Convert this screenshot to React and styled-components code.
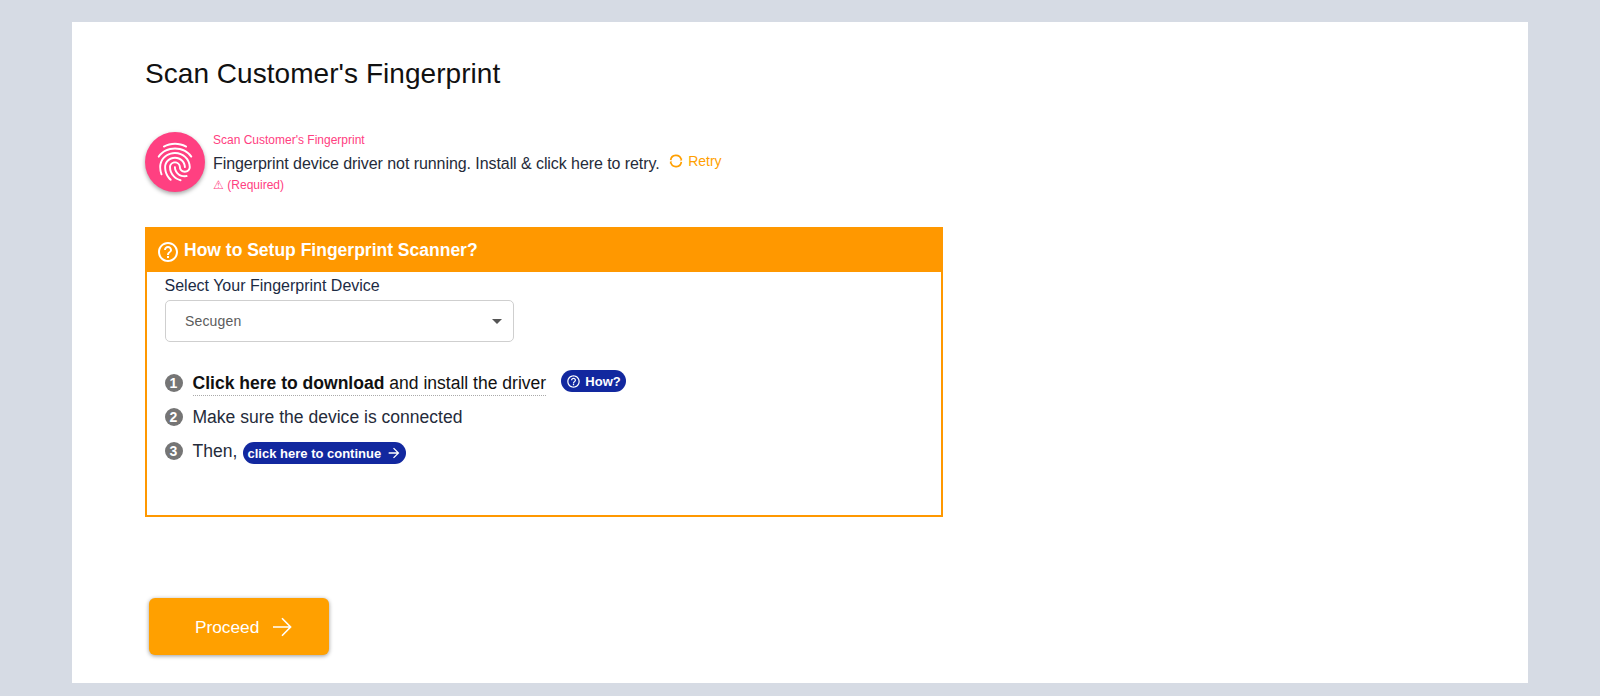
import React from 'react';
import styled, { createGlobalStyle } from 'styled-components';
import { MdArrowForward, MdFingerprint, MdHelpOutline } from 'react-icons/md';

const GlobalStyle = createGlobalStyle`
  * { box-sizing: border-box; }
  body {
    margin: 0;
    background: #d6dbe4;
    font-family: "Liberation Sans", Arial, sans-serif;
    color: #252b3a;
  }
`;

const Page = styled.div`
  min-height: 696px;
  padding: 22px 72px 13px;
`;

const Card = styled.main`
  height: 661px;
  padding: 34px 73px 0;
  background: #fff;
`;

const Title = styled.h1`
  margin: 0;
  font-size: 28px;
  line-height: 36px;
  font-weight: 400;
  letter-spacing: 0.05px;
  color: #111;
`;

const ScanRow = styled.section`
  display: flex;
  margin-top: 39px;
  height: 62px;
`;

const ScanBadge = styled.div`
  display: flex;
  align-items: center;
  justify-content: center;
  width: 60px;
  height: 60px;
  margin: 0.5px 0 0 -0.5px;
  border-radius: 50%;
  background: #ff4081;
  color: #fff;
  font-size: 46px;
  box-shadow: 0 2px 4px rgba(0, 0, 0, 0.35);
`;

const ScanInfo = styled.div`
  margin-left: 8.5px;
`;

const Caption = styled.div`
  font-size: 12px;
  line-height: 18px;
  color: #ff4081;
`;

const Message = styled.div`
  padding-top: 2px;
  font-size: 16px;
  line-height: 25px;
  letter-spacing: -0.07px;
`;

const RetryButton = styled.button`
  display: flex;
  align-items: center;
  gap: 5px;
  height: 28px;
  margin: 15.5px 0 0 9.5px;
  padding: 0;
  border: 0;
  background: none;
  font: 14px "Liberation Sans", Arial, sans-serif;
  color: #ff9f00;
`;

const Guide = styled.section`
  width: 798px;
  height: 290px;
  margin-top: 34px;
  border: 2px solid #ff9800;
`;

const GuideHeader = styled.header`
  display: flex;
  align-items: center;
  gap: 4.5px;
  height: 43px;
  padding: 0 0 0 8.5px;
  background: #ff9800;
  color: #fff;
  font-size: 17.5px;
  font-weight: 700;

  svg { margin-top: 3px; font-size: 24px; }
`;

const GuideBody = styled.div`
  padding: 3px 17.5px;
`;

const FieldLabel = styled.label`
  display: block;
  font-size: 16px;
  line-height: 22px;
  color: #1c2b44;
`;

const SelectBox = styled.div`
  display: flex;
  align-items: center;
  justify-content: space-between;
  width: 349px;
  height: 42px;
  margin-top: 3px;
  padding: 0 11px 0 19.5px;
  border: 1px solid #cfcfcf;
  border-radius: 5px;
  font-size: 14px;
  letter-spacing: 0.15px;
  color: #5c5c5c;
`;

const Caret = styled.span`
  border: 5px solid transparent;
  border-top-color: #555;
  border-bottom: 0;
`;

const Steps = styled.ol`
  margin: 24px 0 0;
  padding: 0;
  list-style: none;
`;

const Step = styled.li`
  display: flex;
  align-items: center;
  height: 34.2px;
  font-size: 17.55px;
`;

const StepNumber = styled.span`
  width: 18px;
  height: 18px;
  margin-right: 10px;
  border-radius: 50%;
  background: #757575;
  color: #fff;
  font-size: 14px;
  line-height: 18px;
  font-weight: 700;
  text-align: center;
`;

const DownloadLink = styled.a`
  padding: 2px 0 1px;
  border-bottom: 1px dotted #aaa;
  color: #111;
`;

const Pill = styled.button`
  display: flex;
  align-items: center;
  gap: ${(p) => p.$gap}px;
  height: 22px;
  margin: ${(p) => p.$margin};
  padding: 0 ${(p) => p.$pad}px;
  border: 0;
  border-radius: 11px;
  background: #12289f;
  color: #fff;
  font: 700 13px "Liberation Sans", Arial, sans-serif;
  svg { font-size: ${(p) => p.$icon}px; }
`;

const Proceed = styled.button`
  display: flex;
  align-items: center;
  gap: 13px;
  width: 180px;
  height: 57px;
  margin: 81px 0 0 4.4px;
  padding: 1px 0 0 45.5px;
  border: 0;
  border-radius: 6px;
  background: #ffa000;
  box-shadow: 0 1px 4px rgba(0, 0, 0, 0.4);
  color: #fff;
  font: 17.3px "Liberation Sans", Arial, sans-serif;
`;

function RetryIcon() {
  return (
    <svg width="14" height="14" viewBox="0 0 14 14" fill="none" stroke="currentColor" strokeWidth="1.7">
      <path d="M1.7 6.2A5.3 5.3 0 0 1 12.1 5.4M12.3 7.8A5.3 5.3 0 0 1 1.9 8.6" />
      <path d="M13.1 4v2.5h-2.4zM.9 10V7.5h2.4z" fill="currentColor" stroke="none" />
    </svg>
  );
}

function LongArrow() {
  return (
    <svg width="20" height="20" viewBox="0 0 20 20" fill="none" stroke="currentColor" strokeWidth="1.6">
      <path d="M1 10h17.5M10 1.2l8.6 8.8-8.6 8.8" />
    </svg>
  );
}

export default function App() {
  return (
    <Page>
      <GlobalStyle />
      <Card>
        <Title>Scan Customer's Fingerprint</Title>
        <ScanRow>
          <ScanBadge><MdFingerprint /></ScanBadge>
          <ScanInfo>
            <Caption>Scan Customer's Fingerprint</Caption>
            <Message>Fingerprint device driver not running. Install &amp; click here to retry.</Message>
            <Caption>⚠ (Required)</Caption>
          </ScanInfo>
          <RetryButton><RetryIcon />Retry</RetryButton>
        </ScanRow>
        <Guide>
          <GuideHeader><MdHelpOutline />How to Setup Fingerprint Scanner?</GuideHeader>
          <GuideBody>
            <FieldLabel>Select Your Fingerprint Device</FieldLabel>
            <SelectBox>Secugen<Caret /></SelectBox>
            <Steps>
              <Step>
                <StepNumber>1</StepNumber>
                <DownloadLink><b>Click here to download</b> and install the driver</DownloadLink>
                <Pill $gap={4.5} $pad={5.2} $icon={15} $margin="-4px 0 0 14.5px"><MdHelpOutline />How?</Pill>
              </Step>
              <Step><StepNumber>2</StepNumber>Make sure the device is connected</Step>
              <Step>
                <StepNumber>3</StepNumber>Then,
                <Pill $gap={4.5} $pad={4.7} $icon={16} $margin="4px 0 0 5.5px">click here to continue<MdArrowForward /></Pill>
              </Step>
            </Steps>
          </GuideBody>
        </Guide>
        <Proceed>Proceed<LongArrow /></Proceed>
      </Card>
    </Page>
  );
}
